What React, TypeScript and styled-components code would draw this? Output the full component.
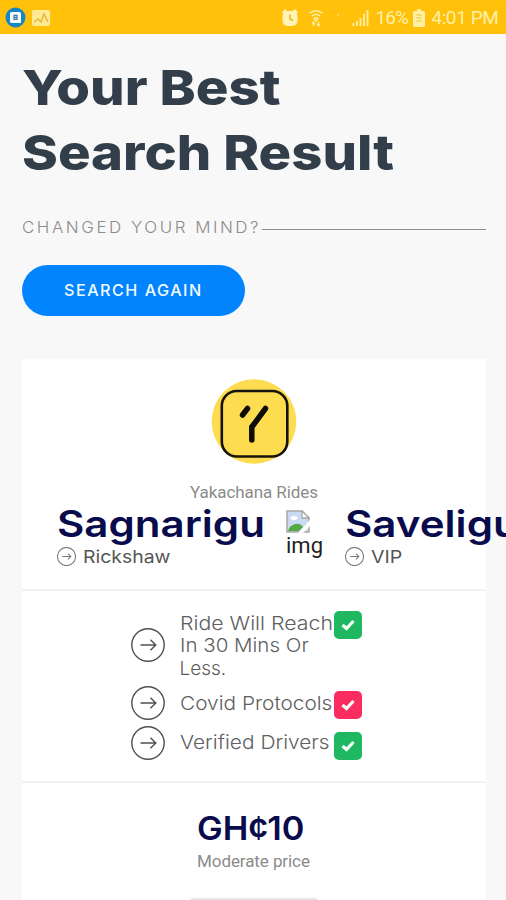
import React from 'react';
import styled, { createGlobalStyle } from 'styled-components';

const GlobalStyle = createGlobalStyle`
  * { box-sizing: border-box; }
  body { margin: 0; background: #f8f8f8; }
  h1, h2, p { margin: 0; font-weight: inherit; }
`;

const Screen = styled.div`
  width: 506px;
  height: 900px;
  overflow: hidden;
  background: #f8f8f8;
  font-family: Inter, sans-serif;
`;

const StatusBar = styled.header`
  display: flex;
  align-items: center;
  justify-content: space-between;
  height: 34px;
  padding: 1px 7.5px 0 5px;
  background: #ffc10a;
  color: #fff0a8;
  font: 400 19px/34px Roboto, sans-serif;
`;

const StatusGroup = styled.div`
  display: flex;
  align-items: center;
`;

const StatusIcon = styled.svg<{ $gap?: number }>`
  display: block;
  flex: none;
  margin-right: ${(p) => p.$gap ?? 0}px;
`;

const StatusText = styled.span<{ $gap?: number; $spacing?: number }>`
  margin-right: ${(p) => p.$gap ?? 0}px;
  letter-spacing: ${(p) => p.$spacing ?? 0}px;
  white-space: nowrap;
`;

const Wide = styled.span<{ $x: number }>`
  display: block;
  width: max-content;
  white-space: nowrap;
  transform: scaleX(${(p) => p.$x});
  transform-origin: left center;
`;

const Page = styled.main`
  padding: 21px 20px 0 22px;
`;

const Title = styled.h1`
  color: #323e4a;
  font-size: 48.5px;
  font-weight: 800;
  line-height: 65px;
`;

const Prompt = styled.div`
  display: flex;
  align-items: center;
  height: 24px;
  margin-top: 29.5px;
`;

const PromptText = styled.span`
  width: 240px;
  color: #8c8c8c;
  font-size: 16px;
  font-weight: 300;
  line-height: 24px;
  letter-spacing: 2.4px;
`;

const Rule = styled.span`
  flex: 1;
  height: 1px;
  margin-top: 6px;
  background: #8c8c8c;
`;

const SearchButton = styled.button`
  display: block;
  width: 223px;
  height: 50.5px;
  margin-top: 26.5px;
  padding: 0 0 0 42px;
  border: 0;
  border-radius: 26px;
  background: #0284fe;
  color: #f2fbff;
  font: 500 16px/50px Inter, sans-serif;
  letter-spacing: 1.5px;
`;

const Card = styled.article`
  width: 464px;
  height: 560px;
  margin-top: 43px;
  background: #fff;
`;

const Section = styled.section<{ $height: number; $top: number }>`
  height: ${(p) => p.$height}px;
  padding-top: ${(p) => p.$top}px;
  border-bottom: 2px solid #f2f2f2;
`;

const Logo = styled.svg`
  display: block;
  margin: 0 auto;
`;

const Provider = styled.p`
  margin: 18px 0 0 168px;
  color: #8b8b8b;
  font: 400 17px/20px Roboto, sans-serif;
  letter-spacing: -0.08px;
`;

const Route = styled.div`
  display: grid;
  grid-template-columns: 229.5px 59px 160px;
  margin-top: 2px;
  padding-left: 34.5px;
`;

const City = styled.h2`
  color: #090c4c;
  font-size: 37px;
  font-weight: 600;
  line-height: 40px;
`;

const RideClass = styled.p`
  display: flex;
  align-items: center;
  gap: 7px;
  margin-top: 2px;
  color: #565656;
  font-size: 17.5px;
  font-weight: 400;
  line-height: 22px;
`;

const MissingImage = styled.div`
  padding-top: 6px;
  color: #222;
  font: 400 22px/25px Roboto, sans-serif;
  svg { display: block; }
`;

const Features = styled.ul`
  margin: 0;
  padding: 0 0 0 109px;
  list-style: none;
`;

const Feature = styled.li`
  display: grid;
  grid-template-columns: 48.5px 154.5px 28px;
  align-items: center;
  margin-bottom: 5.75px;
`;

const FeatureText = styled.div`
  padding-top: 2px;
  color: #606060;
  font-size: 19px;
  font-weight: 300;
  line-height: 22.5px;
`;

const Badge = styled.span<{ $color: string; $top: number }>`
  display: flex;
  align-items: center;
  justify-content: center;
  align-self: start;
  width: 28px;
  height: 28px;
  margin-top: ${(p) => p.$top}px;
  border-radius: 5px;
  background: ${(p) => p.$color};
`;

const Fare = styled.section`
  padding: 23px 0 0 175px;
`;

const Price = styled.h2`
  color: #090c4c;
  font-size: 33px;
  font-weight: 600;
  line-height: 44px;
`;

const PriceNote = styled.p`
  margin-top: 1px;
  color: #8b8b8b;
  font: 400 17px/20px Roboto, sans-serif;
  letter-spacing: -0.08px;
`;

const NextEdge = styled.div`
  width: 128px;
  height: 8px;
  margin: 27.5px 0 0 -7px;
  border-radius: 3px;
  background: #e6e6e6;
`;

const ArrowCircle = ({ size, color, width }: { size: number; color: string; width: number }) => (
  <svg width={size} height={size} viewBox="0 0 34 34" fill="none" stroke={color} strokeWidth={width}>
    <circle cx="17" cy="17" r="16.2" />
    <path d="M9.5 17h15M19.5 11.7l5.3 5.3-5.3 5.3" />
  </svg>
);

const features = [
  { lines: [['Ride Will Reach', 1.12], ['In 30 Mins Or', 1.08], ['Less.', 1.0]], color: '#1fb860', top: 0 },
  { lines: [['Covid Protocols', 1.095]], color: '#fb2c60', top: 5 },
  { lines: [['Verified Drivers', 1.1]], color: '#1fb860', top: 6 },
] as { lines: [string, number][]; color: string; top: number }[];

const rides = [
  { city: 'Sagnarigu', cityX: 1.137, kind: 'Rickshaw', kindX: 1.11 },
  { city: 'Saveligu', cityX: 1.137, kind: 'VIP', kindX: 1.12 },
];

const RideStop = ({ ride }: { ride: (typeof rides)[number] }) => (
  <div>
    <City><Wide $x={ride.cityX}>{ride.city}</Wide></City>
    <RideClass>
      <ArrowCircle size={19} color="#777" width={1.8} />
      <Wide $x={ride.kindX}>{ride.kind}</Wide>
    </RideClass>
  </div>
);

export default function App() {
  return (
    <Screen>
      <GlobalStyle />
      <StatusBar>
        <StatusGroup>
          <StatusIcon $gap={6} width="21" height="21" viewBox="0 0 21 21">
            <circle cx="10.5" cy="10.5" r="10" fill="#1786c4" />
            <path d="M6.500 5h8a1.500 1.500 0 0 1 1.500 1.500v9.500h-9.500a1.500 1.500 0 0 1-1.500-1.500v-8A1.500 1.500 0 0 1 6.500 5Z" fill="#f4fbff" />
            <path d="M9 8.300h3v4H9zM9 10.300h3" fill="none" stroke="#3e7599" strokeWidth="1.200" />
          </StatusIcon>
          <StatusIcon width="18" height="16" viewBox="0 0 18 16">
            <rect width="18" height="16" rx="2" fill="#ffe994" />
            <path d="m2 12 4-3 3 3 3-8 4 8" fill="none" stroke="#e3b738" strokeWidth="1.500" />
          </StatusIcon>
        </StatusGroup>
        <StatusGroup>
          <StatusIcon $gap={10} width="18" height="18" viewBox="0 0 18 18">
            <path d="m2 4 3-3M16 4l-3-3" stroke="#fff3b8" strokeWidth="2.500" />
            <rect x="1.500" y="2" width="15" height="15" rx="5" fill="#fff3b8" />
            <path d="M9 5.500V10l3 1.500" fill="none" stroke="#eab61c" strokeWidth="1.600" />
          </StatusIcon>
          <StatusIcon $gap={13} width="14" height="18" viewBox="0 0 14 18" fill="none" stroke="#fff0a4" strokeWidth="1.400">
            <path d="M.5 4.500Q7-1 13.500 4.500M3 7q4-3.500 8 0M5 9.500q2-1.500 4 0L7 12Z" />
            <path d="M4.500 17v-4M3 14.500 4.500 13 6 14.500M9.500 12.500v4M8 15.200l1.500 1.500 1.500-1.500" />
          </StatusIcon>
          <StatusIcon $gap={11} width="5" height="10" viewBox="0 0 5 10">
            <path d="M1 1l2 2" stroke="#ffdf70" strokeWidth="1.300" />
          </StatusIcon>
          <StatusIcon $gap={7} width="17" height="18" viewBox="0 0 17 18" stroke="#ffec98" strokeWidth="2">
            <path d="M1.500 17v-3M5 17v-5M8.500 17V9M12 17V5M15.500 17V1" />
          </StatusIcon>
          <StatusText $gap={5.5} $spacing={-1}>16%</StatusText>
          <StatusIcon $gap={6} width="12" height="18" viewBox="0 0 12 18">
            <path d="M4 0h4v2h2.500A1.500 1.500 0 0 1 12 3.500v13a1.500 1.500 0 0 1-1.500 1.500h-9A1.500 1.500 0 0 1 0 16.500v-13A1.500 1.500 0 0 1 1.500 2H4Z" fill="#fff0a4" />
            <path d="M3.500 6h5M3.500 9h5M3.500 12h5" stroke="#efc43a" strokeWidth="1.200" />
          </StatusIcon>
          <StatusText $spacing={-0.4}>4:01 PM</StatusText>
        </StatusGroup>
      </StatusBar>

      <Page>
        <Title>
          <Wide $x={1.124}>Your Best</Wide>
          <Wide $x={1.121}>Search Result</Wide>
        </Title>
        <Prompt>
          <PromptText><Wide $x={1.058}>CHANGED YOUR MIND?</Wide></PromptText>
          <Rule />
        </Prompt>
        <SearchButton><Wide $x={1.007}>SEARCH AGAIN</Wide></SearchButton>

        <Card>
          <Section $height={232} $top={20}>
            <Logo width="86" height="85" viewBox="0 0 86 85">
              <circle cx="43" cy="42.500" r="42.300" fill="#fddc50" />
              <rect x="10.800" y="12" width="65.500" height="65.500" rx="15" fill="none" stroke="#15130a" strokeWidth="2.600" />
              <path d="m31.500 36 5-6.500M54.500 29.500 40.800 48v13" fill="none" stroke="#0d0c08" strokeWidth="5.500" strokeLinecap="round" />
            </Logo>
            <Provider>Yakachana Rides</Provider>
            <Route>
              <RideStop ride={rides[0]} />
              <MissingImage>
                <svg width="24" height="23" viewBox="0 0 24 23">
                  <path d="M1 1h15l7 7v14H1Z" fill="#cbd9f2" stroke="#a8a8a8" strokeWidth="1.500" />
                  <path d="M16 1v7h7Z" fill="#fff" stroke="#a8a8a8" strokeWidth="1.300" />
                  <ellipse cx="8" cy="8" rx="3.500" ry="2" fill="#fff" />
                  <path d="M2 21q1-5 7-7 5-1 8 3l-4 4Z" fill="#55a942" />
                  <path d="m24 10-12 13h5l7-7Z" fill="#fff" />
                </svg>
                img
              </MissingImage>
              <RideStop ride={rides[1]} />
            </Route>
          </Section>

          <Section $height={192} $top={20}>
            <Features>
              {features.map((f) => (
                <Feature key={f.lines[0][0]}>
                  <ArrowCircle size={34} color="#505050" width={1.4} />
                  <FeatureText>
                    {f.lines.map(([line, x]) => <Wide key={line} $x={x}>{line}</Wide>)}
                  </FeatureText>
                  <Badge $color={f.color} $top={f.top}>
                    <svg width="14" height="12" viewBox="0 0 14 12" fill="none" stroke="#f5fff8" strokeWidth="3.200">
                      <path d="m1.500 6 4 3.500L12.500 2" />
                    </svg>
                  </Badge>
                </Feature>
              ))}
            </Features>
          </Section>

          <Fare>
            <Price><Wide $x={1.04}>GH¢10</Wide></Price>
            <PriceNote>Moderate price</PriceNote>
            <NextEdge />
          </Fare>
        </Card>
      </Page>
    </Screen>
  );
}
